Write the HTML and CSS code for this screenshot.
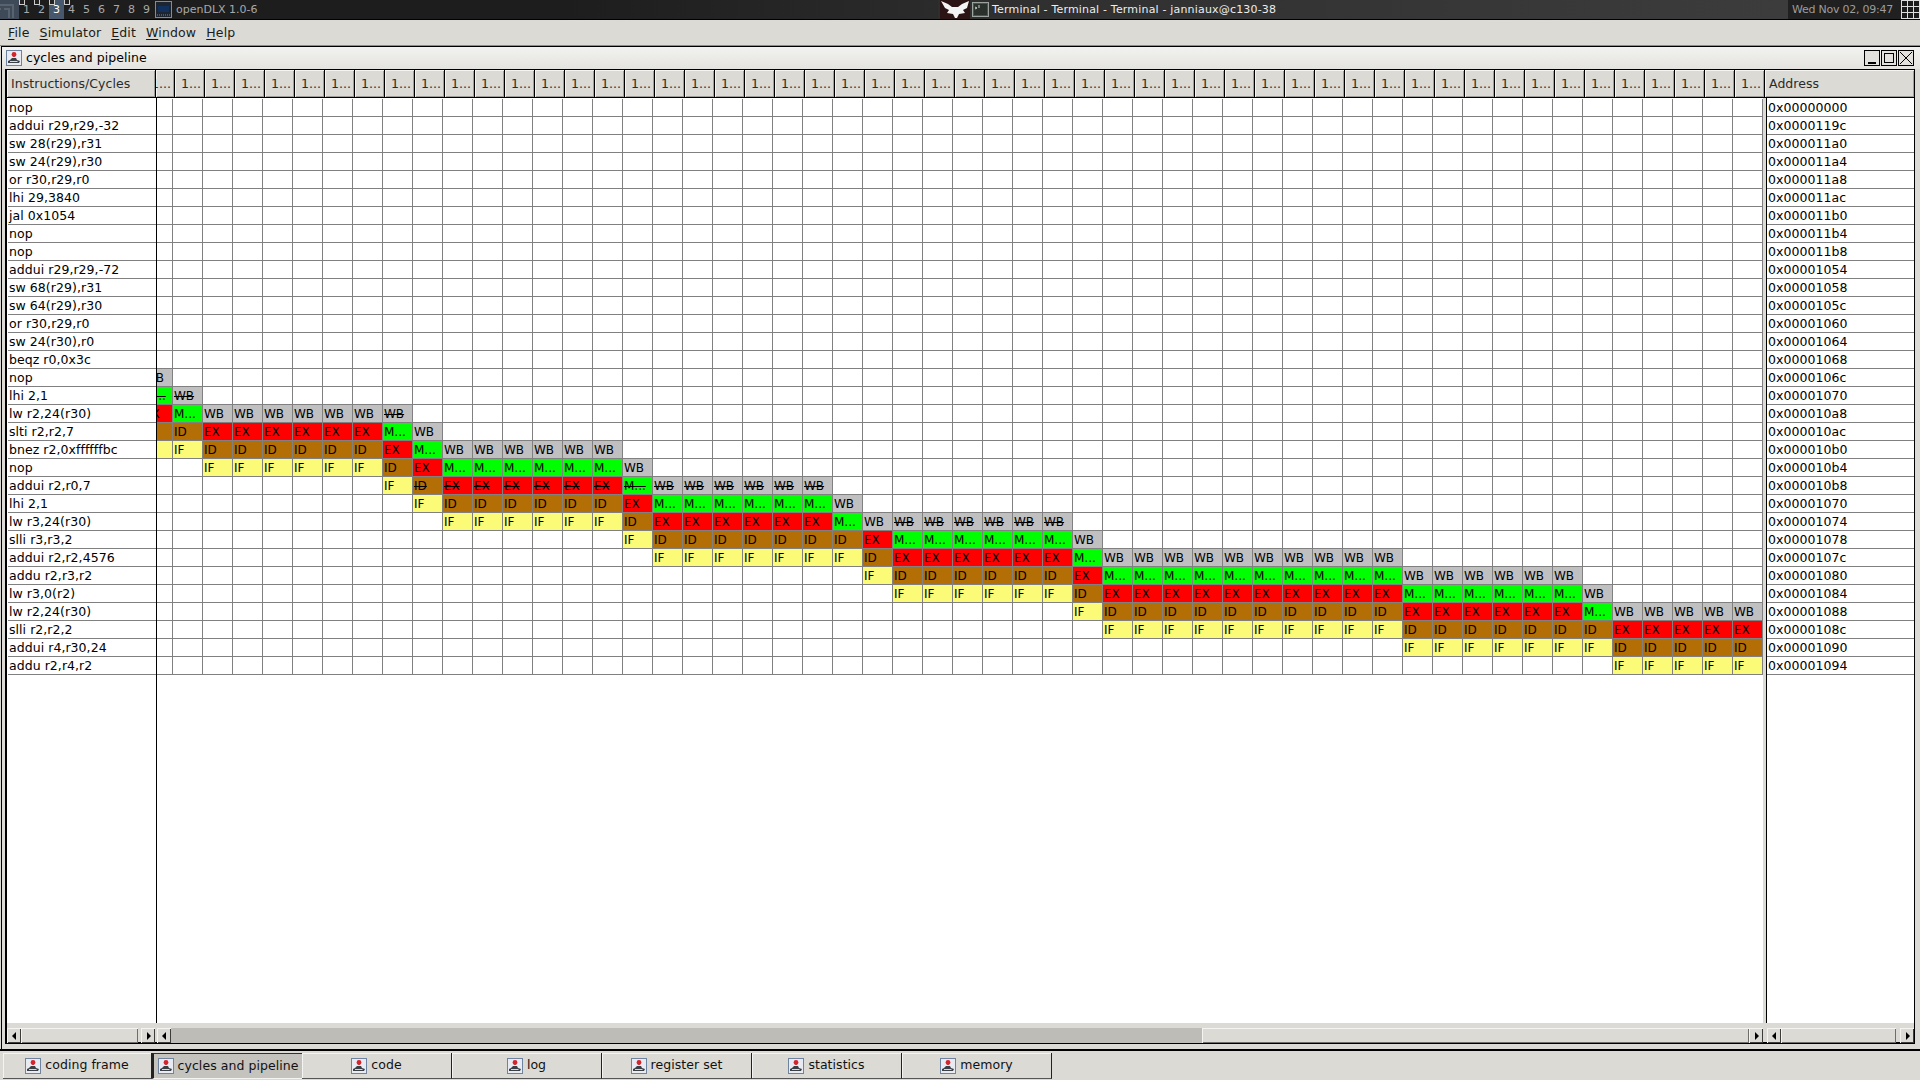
FILE: index.html
```html
<!DOCTYPE html>
<html lang="en">
<head>
<meta charset="utf-8">
<title>openDLX</title>
<link rel="stylesheet" href="styles.css">
</head>
<body>
<svg class="defs" width="0" height="0" aria-hidden="true">
  <symbol id="ji" viewBox="0 0 16 16">
    <rect x="0.5" y="0.5" width="15" height="15" fill="#e8ecf2" stroke="#6d83a0"/>
    <path d="M2 13h11l1-2-3-1-1-2H6L4 10 2 11z" fill="#3b3f46"/>
    <path d="M4 11h7l1 1H4z" fill="#d8d8d8"/>
    <path d="M7 7V4h2v3z" fill="#77808c"/>
    <circle cx="8" cy="4.5" r="2.4" fill="#d8232a"/>
  </symbol>
</svg>
<div class="app">
  <header class="topbar">
    <div class="tb-left">
      <svg class="logo" width="19" height="19" viewBox="0 0 19 19"><rect width="19" height="19" fill="#3e4a57"/><path d="M0 5h13v13M4 9h5v9M0 9h1" fill="none" stroke="#59636f" stroke-width="2"/></svg>
      <span class="ws has-win">1</span><span class="ws has-win">2</span><span class="ws ws-on has-win">3</span><span class="ws has-win">4</span><span class="ws">5</span><span class="ws">6</span><span class="ws">7</span><span class="ws">8</span><span class="ws">9</span>
      <span class="appicon"><svg width="17" height="17" viewBox="0 0 17 17"><rect x="0.5" y="0.5" width="16" height="16" fill="#1c2530" stroke="#8a8a8a"/><rect x="3" y="5" width="11" height="6" fill="#12305e"/><path d="M2 14h13" stroke="#8a8a8a" stroke-dasharray="1 1"/></svg></span>
      <span class="apptitle">openDLX 1.0-6</span>
    </div>
    <div class="tb-task">
      <svg class="bat" width="30" height="19" viewBox="0 0 30 19"><rect width="30" height="19" fill="#2c1414"/><path d="M1 1l7 3 4 3h6l4-3 7-3-2 7-4 2 2 3-6 1-2 4-2 0-2-4-6-1 2-3-4-2z" fill="#f4f4f4"/></svg>
      <svg class="term" width="17" height="15" viewBox="0 0 17 15"><rect x="0.5" y="0.5" width="16" height="14" fill="#4a544e" stroke="#9aa39d"/><rect x="2" y="2" width="13" height="11" fill="#2a302c"/><path d="M3 5l2 1-2 1M7 3v3" stroke="#c8d0c8" fill="none"/></svg>
      <span class="tasktitle">Terminal - Terminal - Terminal - janniaux@c130-38</span>
    </div>
    <div class="tb-clock">Wed Nov 02, 09:47</div>
    <div class="tb-pager"><span></span><span></span><span></span><span></span><span></span><span></span><span></span><span></span><span></span></div>
  </header>

  <nav class="menubar">
    <span class="menu"><u>F</u>ile</span>
    <span class="menu"><u>S</u>imulator</span>
    <span class="menu"><u>E</u>dit</span>
    <span class="menu"><u>W</u>indow</span>
    <span class="menu"><u>H</u>elp</span>
  </nav>

  <main class="desk">
    <div class="iframe-title">
      <svg class="jicon"><use href="#ji"/></svg>
      <span class="iframe-name">cycles and pipeline</span>
      <div class="wctl">
        <span class="wbtn"><svg width="14" height="14" viewBox="0 0 14 14"><path d="M3 12h8" stroke="#000" stroke-width="2"/></svg></span>
        <span class="wbtn"><svg width="14" height="14" viewBox="0 0 14 14"><rect x="2.5" y="2.5" width="9" height="9" fill="none" stroke="#000"/></svg></span>
        <span class="wbtn"><svg width="14" height="14" viewBox="0 0 14 14"><path d="M1 1l12 12M13 1L1 13" stroke="#000"/></svg></span>
      </div>
    </div>
    <div class="panes">
      <div class="hdr" id="hdr">
        <div class="hlabel">Instructions/Cycles</div>
      </div>
      <div class="columns">
        <div class="col-ins" id="ins"></div>
        <div class="col-grid"><div class="grid" id="grid"></div></div>
        <div class="col-addr" id="addr"></div>
      </div>
      <div class="scrolls">
        <div class="sb sb-left">
          <span class="btn b-l"></span><span class="thumb th-side"></span><span class="gap"></span><span class="btn b-r"></span>
        </div>
        <div class="sb sb-mid">
          <span class="btn b-l"></span><span class="track"></span><span class="thumb th-mid"></span><span class="btn b-r"></span>
        </div>
        <div class="sb sb-right">
          <span class="btn b-l"></span><span class="thumb th-side2"></span><span class="gap"></span><span class="btn b-r"></span>
        </div>
      </div>
    </div>
  </main>

  <footer class="tabs">
    <div class="tab"><svg class="jicon"><use href="#ji"/></svg>coding frame</div>
    <div class="tab tab-on"><svg class="jicon"><use href="#ji"/></svg>cycles and pipeline</div>
    <div class="tab"><svg class="jicon"><use href="#ji"/></svg>code</div>
    <div class="tab"><svg class="jicon"><use href="#ji"/></svg>log</div>
    <div class="tab"><svg class="jicon"><use href="#ji"/></svg>register set</div>
    <div class="tab"><svg class="jicon"><use href="#ji"/></svg>statistics</div>
    <div class="tab"><svg class="jicon"><use href="#ji"/></svg>memory</div>
  </footer>
</div>
<script src="app.js"></script>
</body>
</html>
```

FILE: styles.css
```css
* { box-sizing: border-box; }
html, body { margin: 0; padding: 0; overflow: hidden; }
body { font: 12.5px/1 "DejaVu Sans", sans-serif; letter-spacing: .05px; color: #000; background: #dbdad5; }
.defs { position: absolute; }
.app { width: 1920px; height: 1080px; display: flex; flex-direction: column; }

/* window manager strip */
.topbar { height: 20px; flex: none; display: flex; border-bottom: 1px solid #000; font-size: 11px; letter-spacing: 0; color: #a8a8a8; background: #1e1e1e; }
.tb-left { width: 938px; flex: none; display: flex; align-items: center; background: linear-gradient(90deg, #1d1d1d 0, #1d1d1d 60%, #2b2b2b 100%); }
.logo { flex: none; }
.ws { position: relative; width: 15px; height: 19px; line-height: 19px; text-align: center; flex: none; }
.ws-on { background: #48586c; color: #fff; }
.has-win::before { content: ""; position: absolute; left: 0; top: -1px; width: 4px; height: 4px; border: 1px solid #ccc; background: #222; }
.appicon { margin-left: 1px; width: 17px; height: 17px; flex: none; }
.apptitle { margin-left: 4px; }
.tb-task { flex: 1; display: flex; align-items: center; padding-left: 2px; background: linear-gradient(90deg, #2e2e2e, #3c3c3c); color: #ededed; }
.bat { flex: none; }
.term { flex: none; margin-left: 2px; }
.tasktitle { margin-left: 3px; letter-spacing: .18px; }
.tb-clock { width: 113px; flex: none; line-height: 19px; padding-left: 4px; background: #202020; color: #9c9c9c; white-space: nowrap; letter-spacing: -.25px; }
.tb-pager { width: 19px; flex: none; display: grid; grid-template-columns: repeat(3, 5px); grid-auto-rows: 5px; gap: 1px; padding: 1px 0 0 1px; background: #1a1a1a; }
.tb-pager span { background: #1a1a1a; outline: 1px solid #ddd; }

/* menu */
.menubar { height: 26px; flex: none; display: flex; align-items: center; padding: 1px 0 0 8px; gap: 10px; border-bottom: 1px solid #8d8c87; color: #1a1a1a; letter-spacing: .15px; }
.menu u { text-underline-offset: 2px; }

/* internal frame */
.desk { height: 1003px; flex: none; margin-left: 1px; padding: 0 5px 0 3px; border-top: 1px solid #000; border-left: 1px solid #000; display: flex; flex-direction: column; }
.iframe-title { height: 22px; flex: none; display: flex; align-items: center; margin: 0 -5px 0 -3px; padding: 0 6px 0 4px; background: linear-gradient(180deg, #f2f2f0, #e4e3df); }
.jicon { width: 16px; height: 16px; flex: none; }
.iframe-name { margin-left: 4px; }
.wctl { margin-left: auto; display: flex; gap: 1px; }
.wbtn { width: 16px; height: 16px; border: 1px solid #000; display: block; background: #e2e1dd; }
.wbtn svg { display: block; }

.panes { height: 975px; flex: none; display: flex; flex-direction: column; border-top: 1px solid #000; border-left: 2px solid #000; border-right: 1px solid #000; border-bottom: 2px solid #000; }
.hdr { height: 28px; flex: none; display: flex; border-bottom: 1px solid #000; }
.hcell, .hlabel { height: 27px; line-height: 28px; color: #2a2a2a; overflow: hidden; white-space: nowrap; border-right: 1px solid #000; box-shadow: inset 1px 1px 0 #f4f4f2, inset -1px -1px 0 #9f9e99; flex: none; }
.hlabel { width: 149px; padding-left: 4px; }
.hcell { width: 30px; padding-left: 6px; }
.hc0 { width: 19px; padding-left: 0; text-indent: -5px; }
.haddr { width: 149px; padding-left: 4px; border-right: 0; }

.columns { height: 925px; flex: none; display: flex; }
.col-ins { width: 150px; flex: none; padding-top: 1px; background: #fff; border-right: 1px solid #000; }
.col-addr { width: 148px; flex: none; padding-top: 1px; background: #fff; border-left: 1px solid #000; }
.col-grid { width: 1609px; flex: none; padding-top: 1px; background: #fff; border-right: 3px solid #dbdad5; }
.lbl { height: 18px; line-height: 17px; padding-left: 1px; margin-left: 1px; border-bottom: 1px solid #808080; white-space: nowrap; overflow: hidden; }
.col-addr .lbl { margin-left: 0; padding-left: 1px; }

.grid { display: grid; grid-template-columns: 16px repeat(53, 30px); grid-auto-rows: 18px; font-size: 12px; letter-spacing: 0; }
.c { border-right: 1px solid #808080; border-bottom: 1px solid #808080; line-height: 19px; padding-left: 1px; overflow: hidden; white-space: nowrap; }
.c0 { text-indent: -14px; }
.WB { background: #c0c0c0; }
.M { background: #00ff00; }
.EX { background: #ff0000; }
.ID { background: #b36f05; }
.IF { background: #fbfb78; }
.strike { text-decoration: line-through; text-decoration-thickness: 1px; }

/* scroll bars */
.scrolls { flex: 1; display: flex; padding-top: 5px; align-items: flex-start; }
.sb { height: 15px; display: flex; flex: none; }
.sb-left { width: 150px; padding-right: 2px; }
.sb-mid { width: 1609px; padding-right: 3px; }
.sb-right { width: 148px; padding-left: 1px; }
.btn { position: relative; width: 14px; flex: none; background: #dbdad5; box-shadow: inset 1px 1px 0 #f4f4f2, inset -1px -1px 0 #3c3c3a; }
.btn::after { content: ""; position: absolute; top: 4px; border: 4px solid transparent; }
.b-l::after { left: 1px; border-right-color: #000; }
.b-r::after { left: 6px; border-left-color: #000; }
.thumb { flex: none; background: #dbdad5; box-shadow: inset 1px 1px 0 #f4f4f2, inset -1px -1px 0 #6e6d69; }
.th-side { width: 117px; }
.th-side2 { width: 115px; }
.th-mid { width: 547px; }
.track { flex: 1; background: #bdbcb6; }
.gap { flex: 1; }

/* tabs */
.tabs { flex: 1; display: flex; border-top: 2px solid #000; padding: 2px 0 0 3px; }
.tab { width: 150px; height: 26px; flex: none; display: flex; align-items: center; justify-content: center; gap: 4px; color: #111; background: #dbdad5; border-right: 1px solid #222; border-bottom: 1px solid #555; box-shadow: inset 1px 1px 0 #f4f4f2; }
.tab:first-child { width: 149px; }
.tab-on { background: #c5c3be; border-right: 0; border-left: 2px solid #222; border-top: 1px solid #333; border-bottom: 1px solid #f4f4f2; box-shadow: none; }
```

FILE: app.js
```js
var rows = [
  ["nop","0x00000000"],["addui r29,r29,-32","0x0000119c"],["sw 28(r29),r31","0x000011a0"],
  ["sw 24(r29),r30","0x000011a4"],["or r30,r29,r0","0x000011a8"],["lhi 29,3840","0x000011ac"],
  ["jal 0x1054","0x000011b0"],["nop","0x000011b4"],["nop","0x000011b8"],
  ["addui r29,r29,-72","0x00001054"],["sw 68(r29),r31","0x00001058"],["sw 64(r29),r30","0x0000105c"],
  ["or r30,r29,r0","0x00001060"],["sw 24(r30),r0","0x00001064"],["beqz r0,0x3c","0x00001068"],
  ["nop","0x0000106c",0,"WB"],
  ["lhi 2,1","0x00001070",0,"m wb"],
  ["lw r2,24(r30)","0x000010a8",0,"EX M WB6 wb"],
  ["slti r2,r2,7","0x000010ac",0,"ID2 EX6 M WB"],
  ["bnez r2,0xffffffbc","0x000010b0",0,"IF2 ID6 EX M WB6"],
  ["nop","0x000010b4",2,"IF6 ID EX M6 WB"],
  ["addui r2,r0,7","0x000010b8",8,"IF id ex6 m wb6"],
  ["lhi 2,1","0x00001070",9,"IF ID6 EX M6 WB"],
  ["lw r3,24(r30)","0x00001074",10,"IF6 ID EX6 M WB wb6"],
  ["slli r3,r3,2","0x00001078",16,"IF ID7 EX M6 WB"],
  ["addui r2,r2,4576","0x0000107c",17,"IF7 ID EX6 M WB10"],
  ["addu r2,r3,r2","0x00001080",24,"IF ID6 EX M10 WB6"],
  ["lw r3,0(r2)","0x00001084",25,"IF6 ID EX10 M6 WB"],
  ["lw r2,24(r30)","0x00001088",31,"IF ID10 EX6 M WB5"],
  ["slli r2,r2,2","0x0000108c",32,"IF10 ID7 EX5"],
  ["addui r4,r30,24","0x00001090",42,"IF7 ID5"],
  ["addu r2,r4,r2","0x00001094",49,"IF5"]
];
var COLS = 54;

function el(cls, text) {
  var d = document.createElement("div");
  d.className = cls;
  if (text) d.textContent = text;
  return d;
}

var hdr = document.getElementById("hdr");
for (var h = 0; h < COLS; h++) hdr.appendChild(el(h ? "hcell" : "hcell hc0", "1..."));
hdr.appendChild(el("hcell haddr", "Address"));

var ins = document.getElementById("ins"), addr = document.getElementById("addr"), grid = document.getElementById("grid");
rows.forEach(function (r) {
  ins.appendChild(el("lbl", r[0]));
  addr.appendChild(el("lbl", r[1]));
  var stages = [];
  if (r[3]) r[3].split(" ").forEach(function (tok) {
    var m = tok.match(/^([a-zA-Z]+)(\d*)$/), n = +(m[2] || 1);
    for (var i = 0; i < n; i++) stages.push(m[1]);
  });
  for (var c = 0; c < COLS; c++) {
    var s = r[3] ? stages[c - r[2]] : null, cls = c ? "c" : "c c0", text = "";
    if (s) {
      var up = s.toUpperCase();
      cls += " " + up + (s !== up ? " strike" : "");
      text = up === "M" ? "M..." : up;
    }
    grid.appendChild(el(cls, text));
  }
});
```
